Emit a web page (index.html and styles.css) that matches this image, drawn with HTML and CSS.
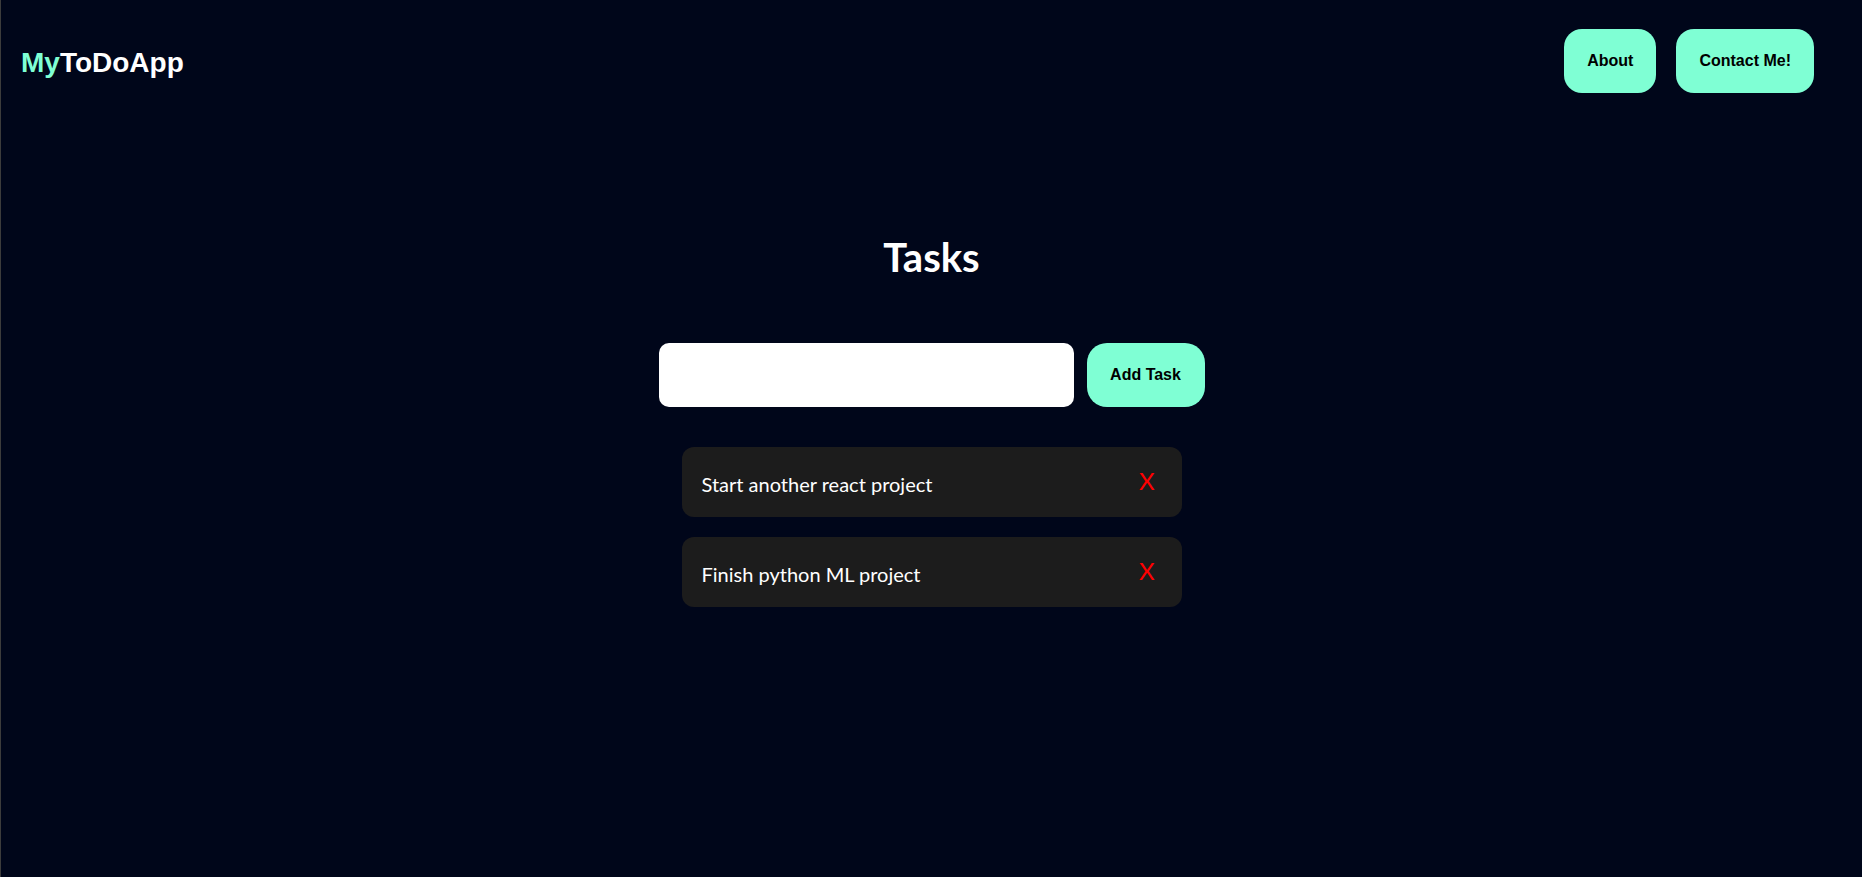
FILE: index.html
```html
<!DOCTYPE html>
<html lang="en">
<head>
<meta charset="utf-8">
<title>MyToDoApp</title>
<link rel="stylesheet" href="styles.css">
</head>
<body>
<div class="app">
  <header class="topbar">
    <div class="logo"><span class="logo-my">My</span>ToDoApp</div>
    <nav class="nav">
      <button class="pill-btn">About</button>
      <button class="pill-btn">Contact Me!</button>
    </nav>
  </header>
  <main class="main">
    <h1 class="title">Tasks</h1>
    <form class="task-form">
      <input class="task-input" type="text">
      <button class="pill-btn add-btn" type="button">Add Task</button>
    </form>
    <ul class="task-list">
      <li class="task-card"><span class="task-text">Start another react project</span><span class="task-del">X</span></li>
      <li class="task-card"><span class="task-text">Finish python ML project</span><span class="task-del">X</span></li>
    </ul>
  </main>
</div>
</body>
</html>
```
FILE: styles.css
```css
html, body {
  margin: 0;
  padding: 0;
  height: 100%;
}
body {
  background: #00061a;
  border-left: 1px solid #3c3c3c;
  box-sizing: border-box;
  color: #fff;
  font-family: Lato, "Noto Sans", sans-serif;
}
.app {
  min-height: 100%;
}
.topbar {
  display: flex;
  align-items: flex-start;
  justify-content: space-between;
  padding: 29px 48px 0 20px;
}
.logo {
  font-family: "Liberation Sans", Arial, sans-serif;
  font-weight: 700;
  font-size: 28px;
  line-height: 32px;
  margin-top: 18px;
  color: #fff;
}
.logo-my {
  color: #7fffd4;
}
.nav {
  display: flex;
  gap: 20px;
}
.pill-btn {
  background: #7fffd4;
  color: #000;
  border: none;
  border-radius: 18px;
  font-family: "Liberation Sans", Arial, sans-serif;
  font-weight: 700;
  font-size: 16px;
  line-height: 18px;
  height: 64px;
  padding: 0 23px;
  cursor: pointer;
}
.main {
  display: flex;
  flex-direction: column;
  align-items: center;
}
.title {
  margin: 140px 0 0;
  font-size: 40px;
  font-weight: 700;
  line-height: 48px;
}
.task-form {
  display: flex;
  gap: 13px;
  margin-top: 62px;
}
.task-input {
  width: 415px;
  height: 64px;
  box-sizing: border-box;
  border: none;
  border-radius: 10px;
  background: #fff;
  padding: 0 14px;
  font-size: 18px;
}
.add-btn {
  width: 118px;
  padding: 0;
  border-radius: 20px;
}
.task-list {
  list-style: none;
  margin: 40px 0 0;
  padding: 0;
  width: 500px;
  display: flex;
  flex-direction: column;
  gap: 20px;
}
.task-card {
  display: flex;
  align-items: center;
  justify-content: space-between;
  height: 70px;
  box-sizing: border-box;
  padding: 0 27px 0 20px;
  background: #1c1c1c;
  border-radius: 12px;
}
.task-text {
  font-size: 20px;
  line-height: 24px;
  margin-top: 3px;
}
.task-del {
  color: #ff0000;
  font-size: 24px;
  line-height: 28px;
  margin-top: -2px;
}
```
